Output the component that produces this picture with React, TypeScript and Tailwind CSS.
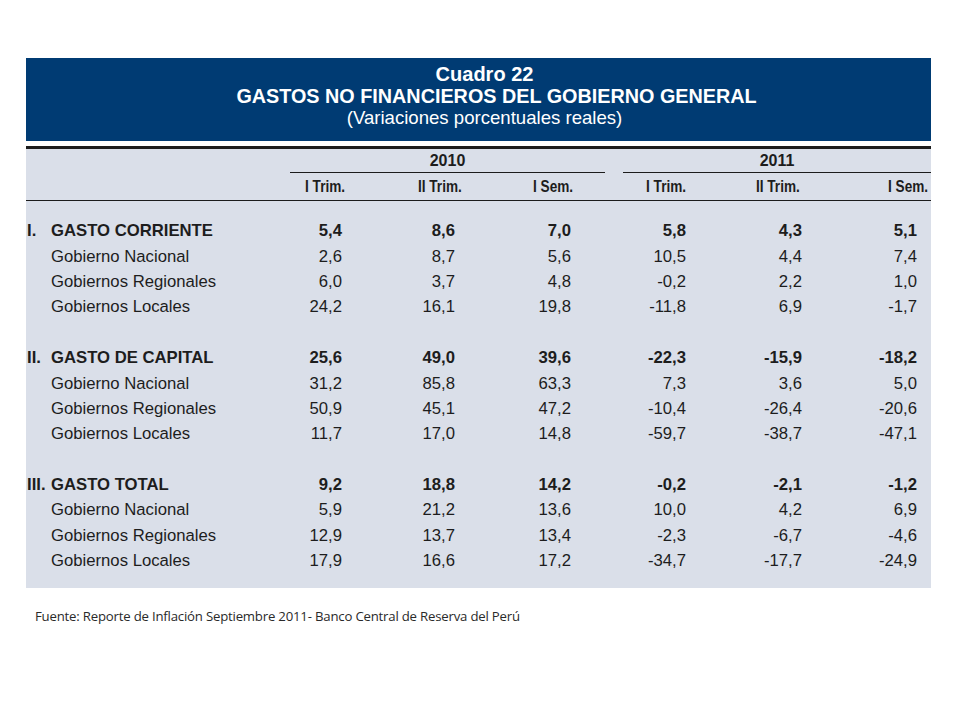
const sections = [
  {
    mark: "I.",
    title: "GASTO CORRIENTE",
    total: ["5,4", "8,6", "7,0", "5,8", "4,3", "5,1"],
    rows: [
      ["Gobierno Nacional", "2,6", "8,7", "5,6", "10,5", "4,4", "7,4"],
      ["Gobiernos Regionales", "6,0", "3,7", "4,8", "-0,2", "2,2", "1,0"],
      ["Gobiernos Locales", "24,2", "16,1", "19,8", "-11,8", "6,9", "-1,7"],
    ],
  },
  {
    mark: "II.",
    title: "GASTO DE CAPITAL",
    total: ["25,6", "49,0", "39,6", "-22,3", "-15,9", "-18,2"],
    rows: [
      ["Gobierno Nacional", "31,2", "85,8", "63,3", "7,3", "3,6", "5,0"],
      ["Gobiernos Regionales", "50,9", "45,1", "47,2", "-10,4", "-26,4", "-20,6"],
      ["Gobiernos Locales", "11,7", "17,0", "14,8", "-59,7", "-38,7", "-47,1"],
    ],
  },
  {
    mark: "III.",
    title: "GASTO TOTAL",
    total: ["9,2", "18,8", "14,2", "-0,2", "-2,1", "-1,2"],
    rows: [
      ["Gobierno Nacional", "5,9", "21,2", "13,6", "10,0", "4,2", "6,9"],
      ["Gobiernos Regionales", "12,9", "13,7", "13,4", "-2,3", "-6,7", "-4,6"],
      ["Gobiernos Locales", "17,9", "16,6", "17,2", "-34,7", "-17,7", "-24,9"],
    ],
  },
]

const grid = "grid grid-cols-[201px_115px_113px_116px_115px_116px_115px]"

// column headings in the source are a condensed face
function Head({ text, className = "" }: { text: string; className?: string }) {
  return (
    <div className={`text-right ${className}`}>
      <span className="inline-block origin-right scale-x-[0.8]">{text}</span>
    </div>
  )
}

function DataRow({ mark, label, values, bold }: { mark?: string; label: string; values: string[]; bold?: boolean }) {
  return (
    <div className={`${grid} h-[25.4px] items-center ${bold ? "font-bold" : ""}`}>
      <div className="flex">
        <span className="w-[25px] pl-[1px]">{mark}</span>
        <span className="whitespace-nowrap">{label}</span>
      </div>
      {values.map((v, i) => (
        <div key={i} className="text-right">{v}</div>
      ))}
    </div>
  )
}

export default function App() {
  return (
    <div className="min-h-[720px] w-[960px] bg-white pt-[58px] pl-[26px] font-['Liberation_Sans',Arial,sans-serif]">
      <div className="w-[905px]">
        <div className="h-[83px] bg-[#003b73] pt-[5px] pl-[12px] text-center text-white">
          <div className="text-[20px] font-bold leading-[22px]">Cuadro 22</div>
          <div className="pl-[24px] text-[19.8px] font-bold leading-[22px]">GASTOS NO FINANCIEROS DEL GOBIERNO GENERAL</div>
          <div className="text-[18.6px] leading-[22px]">(Variaciones porcentuales reales)</div>
        </div>

        <div className="mt-[5px] h-[3px] bg-[#1c1c1c]" />

        <div className="bg-[#dadfe9] pb-[15px] text-[16.7px] text-[#1d1d1d]">
          <div className="flex h-[24px] text-[16px] font-bold">
            <div className="w-[264px]" />
            <div className="flex w-[315px] items-center justify-center border-b border-[#1c1c1c] pt-[1px]">2010</div>
            <div className="w-[18px]" />
            <div className="flex w-[308px] items-center justify-center border-b border-[#1c1c1c] pt-[1px]">2011</div>
          </div>
          <div className={`${grid} h-[28px] items-center border-b border-[#1c1c1c] text-[17px] font-bold`}>
            <div />
            <Head text="I Trim." className="mr-[-3px]" />
            <Head text="II Trim." className="mr-[-7px]" />
            <Head text="I Sem." className="mr-[-2px]" />
            <Head text="I Trim." />
            <Head text="II Trim." className="mr-[2px]" />
            <Head text="I Sem." className="mr-[-11px]" />
          </div>

          <div className="pt-[17px]">
            {sections.map((s, si) => (
              <div key={s.mark}>
                {si > 0 && <div className="h-[25.4px]" />}
                <DataRow mark={s.mark} label={s.title} values={s.total} bold />
                {s.rows.map((r) => (
                  <DataRow key={r[0]} label={r[0]} values={r.slice(1)} />
                ))}
              </div>
            ))}
          </div>
        </div>
      </div>

      <div className="mt-[19px] pl-[9px] font-['Open_Sans',sans-serif] text-[13.2px] tracking-[-0.2px] text-[#2a2a2a]">
        Fuente: Reporte de Inflación Septiembre 2011- Banco Central de Reserva del Perú
      </div>
    </div>
  )
}
